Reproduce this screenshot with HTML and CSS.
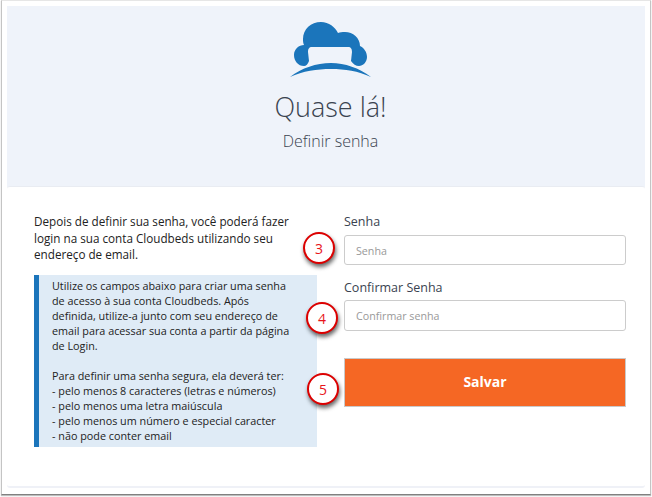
FILE: index.html
```html
<!DOCTYPE html>
<html lang="pt">
<head>
<meta charset="utf-8">
<title>Definir senha</title>
<link rel="stylesheet" href="styles.css">
</head>
<body>
<div class="window">
  <header class="hero">
    <svg class="logo" width="81" height="57" viewBox="0 0 81 57" aria-hidden="true">
      <path class="logo-fill" d="M14 45C8 45 4 40 4 34C4 28 9 24 14 24C13 22 13 20 13 18C13 8 21 1 31 1C39 1 45 6 48 12C50 11 52 11 55 11C63 11 70 17 70 25C74 27 77 31 77 36C77 41 73 45 69 45C66 45 63 43 61 40L62 31C62 28 61 26 58 26L22 26C19 26 18 28 18 31L19 40C18 43 16 45 14 45Z"/>
      <path class="logo-fill" d="M0 56C12 47 26 42 41 42C55 42 69 47 81 56C68 50 55 48 41 48C27 48 13 50 0 56Z"/>
    </svg>
    <h1 class="title">Quase lá!</h1>
    <p class="subtitle">Definir senha</p>
  </header>
  <main class="panel">
    <section class="info">
      <p class="lead">Depois de definir sua senha, você poderá fazer login na sua conta Cloudbeds utilizando seu endereço de email.</p>
      <div class="note">
        <p>Utilize os campos abaixo para criar uma senha de acesso à sua conta Cloudbeds. Após definida, utilize-a junto com seu endereço de email para acessar sua conta a partir da página de Login.</p>
        <p>Para definir uma senha segura, ela deverá ter:<br>- pelo menos 8 caracteres (letras e números)<br>- pelo menos uma letra maiúscula<br>- pelo menos um número e especial caracter<br>- não pode conter email</p>
      </div>
    </section>
    <form class="form">
      <label class="label" for="senha">Senha</label>
      <input class="field field-first" id="senha" type="password" placeholder="Senha">
      <label class="label" for="confirmar">Confirmar Senha</label>
      <input class="field field-second" id="confirmar" type="password" placeholder="Confirmar senha">
      <button class="save" type="button">Salvar</button>
    </form>
  </main>
  <span class="callout callout-3">3</span>
  <span class="callout callout-4">4</span>
  <span class="callout callout-5">5</span>
</div>
</body>
</html>
```

FILE: styles.css
```css
* { box-sizing: border-box; }
html, body { margin: 0; background: #fff; }
body { width: 652px; height: 497px; overflow: hidden; font-family: "Open Sans", sans-serif; color: #2f3640; }
.window {
  position: relative;
  width: 650px;
  height: 495px;
  margin-left: 1px;
  padding: 5px 5px 6px 5px;
  background: #fff;
  border: 1px solid #c4c4c4;
  border-top-color: #e6e6e6;
  border-bottom-color: #808080;
  box-shadow: 0 1px 1px #bdbdbd;
}
.hero {
  display: flex;
  flex-direction: column;
  align-items: center;
  height: 181px;
  padding: 15px 0 0 9px;
  background: #eff3fa;
}
.logo { display: block; flex: none; }
.logo-fill { fill: #1b75bb; }
.title {
  margin: 11px 0 0;
  font-size: 27px;
  font-weight: 300;
  line-height: 36px;
  color: #3a4350;
}
.subtitle {
  margin: 5px 0 0;
  font-size: 16px;
  font-weight: 300;
  line-height: 22px;
  color: #3a4350;
}
.panel {
  display: grid;
  grid-template-columns: 283px 282px;
  column-gap: 27px;
  height: 302px;
  margin-top: -1px;
  padding: 26px 0 0 27px;
  background: #fff;
  border-top: 1px solid #e9ecf2;
  border-bottom: 2px solid #eff1f7;
  border-radius: 3px;
}
.lead {
  margin: 0;
  font-size: 11.700px;
  line-height: 16.500px;
  color: #222;
}
.note {
  height: 172px;
  margin-top: 12px;
  padding: 3px 22px 0 13px;
  background: #dfebf6;
  border-left: 5px solid #1b75bb;
  font-size: 10.800px;
  line-height: 15px;
  color: #222;
}
.note p { margin: 0 0 15px; }
.note p:last-child { margin-bottom: 0; }
.label {
  display: block;
  font-size: 12.500px;
  line-height: 17px;
  color: #3a4350;
}
.field {
  display: block;
  width: 100%;
  height: 30px;
  margin: 5px 0 15px;
  padding: 0 11px;
  background: #fff;
  border: 1px solid #ccc;
  border-radius: 3px;
  font-family: "Open Sans", sans-serif;
  font-size: 10.700px;
}
.field::placeholder { color: #999; opacity: 1; }
.field-first { margin-bottom: 14px; padding-top: 1px; }
.field-second { height: 31px; margin-top: 4px; }
.save {
  display: block;
  width: 100%;
  height: 49px;
  margin-top: 27px;
  padding: 0 0 2px;
  background: #f56724;
  border: 1px solid #c9c9c9;
  color: #fff;
  font-family: "Open Sans", sans-serif;
  font-size: 14px;
  font-weight: 700;
}
.callout {
  position: absolute;
  width: 32px;
  height: 32px;
  display: flex;
  align-items: center;
  justify-content: center;
  background: #fff;
  border: 2.500px solid #dc0000;
  border-radius: 50%;
  box-shadow: 1px 3px 4px rgba(0, 0, 0, .6);
  color: #e8151b;
  font-size: 14px;
}
.callout-3 { left: 301px; top: 231px; }
.callout-4 { left: 304px; top: 301px; }
.callout-5 { left: 305px; top: 372px; }
```
